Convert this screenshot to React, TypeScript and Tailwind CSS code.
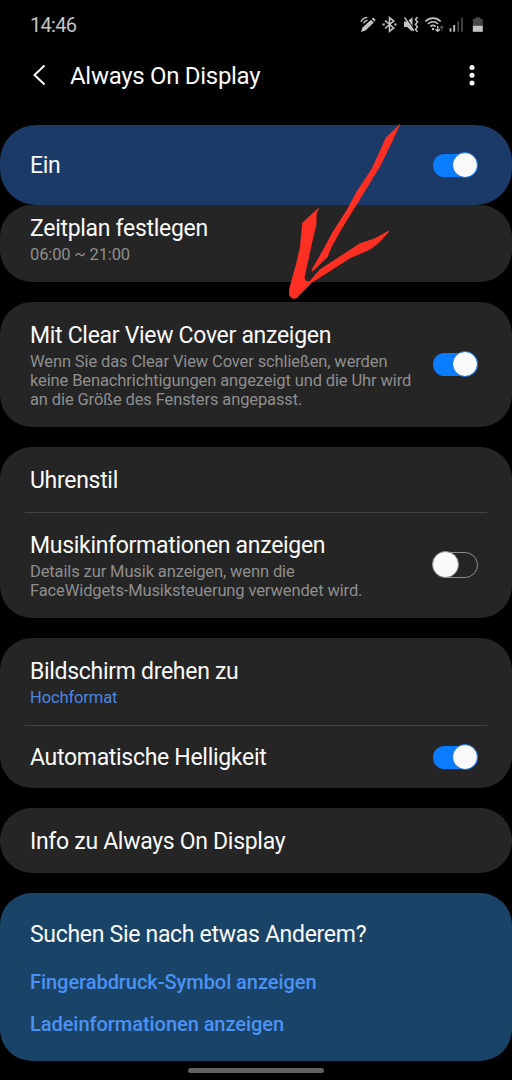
import { ReactNode, useState } from "react";

function Toggle({ initial, className = "" }: { initial: boolean; className?: string }) {
  const [on, setOn] = useState(initial);

  return (
    <button
      role="switch"
      aria-checked={on}
      onClick={() => setOn(!on)}
      className={`flex h-[26px] w-[45px] shrink-0 items-center ${className}`}
    >
      {on ? (
        <span className="flex h-[23px] w-full items-center justify-end rounded-full bg-[#0a7cff]">
          <span className="size-[26px] shrink-0 rounded-full border border-[#0a6fe0] bg-[#fafafa]" />
        </span>
      ) : (
        <span className="flex h-[26px] w-full items-center rounded-full border border-[#8c8c8c]">
          <span className="-ml-[2px] size-[27px] shrink-0 rounded-full border border-[#8c8c8c] bg-[#fafafa]" />
        </span>
      )}
    </button>
  );
}

interface RowProps {
  title: string;
  children?: ReactNode;
  toggle?: boolean;
  className?: string;
}

function Row({ title, children, toggle, className = "" }: RowProps) {
  return (
    <div className={`flex items-center justify-between pr-[34px] pl-[30px] ${className}`}>
      <div>
        <h2 className="pt-[2px] text-[23px] leading-[26px] tracking-[-0.3px]">{title}</h2>
        {children}
      </div>
      {toggle !== undefined && <Toggle initial={toggle} className={children ? "mb-[2px]" : ""} />}
    </div>
  );
}

function Divider() {
  return <div className="mr-[25px] ml-[25px] h-px bg-[#424242]" />;
}

function StatusIcons() {
  return (
    <svg className="h-[20px] w-[126px]" viewBox="358 14 126 20" fill="none" stroke="#c4c4c4">
      {/* pen */}
      <path d="M361 32l1.300-4.300 8.700-8 2.800 2.800-8.300 8z" fill="#c4c4c4" stroke="none" />
      <path d="M371.700 18.800l1.600-1.400 2.400 2.500-1.500 1.500z" fill="#c4c4c4" stroke="none" />
      <path d="M361 22c.8-2.700 3-4.300 6.300-4.500M363.600 23.300c.5-1.800 1.800-2.800 4-3" strokeWidth="1.300" />
      {/* bluetooth */}
      <path d="M385 20.500l8.700 7.500-4.200 3.300V17.700l4.200 3.300-8.700 7.500" strokeWidth="1.600" />
      <path d="M382.500 24.500h2.200M394.300 24.500h2.200" strokeWidth="2" />
      {/* muted, vibrate */}
      <path d="M404 21.500h3l5.500-4.200v14.500l-5.500-4.800h-3z" fill="#c4c4c4" stroke="none" />
      <path d="M405.500 16.800l9 13" stroke="#000" strokeWidth="1.200" />
      <path d="M404.500 17.300l9.300 13.200" strokeWidth="1.400" />
      <path d="M417.500 17l-2 2.400 2 2.500-2 2.500 2 2.500-2 2.500 2 2.400" strokeWidth="1.500" />
      {/* wifi */}
      <path d="M425.300 21.300c4.700-4.300 10.700-4.300 15.400 0M427.900 24c3.300-2.900 6.900-2.900 10.200 0M430.400 26.600c1.700-1.500 3.500-1.500 5.200 0" strokeWidth="1.600" />
      <circle cx="433" cy="29" r="1.200" fill="#c4c4c4" stroke="none" />
      <path d="M437.700 26v5M435.500 29.200l2.200 2.200 2.200-2.200" strokeWidth="1.300" />
      <path d="M441.800 30.500v-4M440 27.800l1.800-1.800 1.800 1.800" stroke="#555" strokeWidth="1.200" />
      {/* signal */}
      <path d="M450.500 28.300v3.500M454.200 25v6.800" strokeWidth="1.800" />
      <path d="M458.200 21.300v10.500M462 17.700v14.100" stroke="#484848" strokeWidth="1.700" />
      {/* battery */}
      <path d="M472.800 19h2.500v-1.700h5V19h2.500v7h-10z" fill="#484848" stroke="none" />
      <path d="M472.800 25.800h10v6h-10z" fill="#c4c4c4" stroke="none" />
    </svg>
  );
}

function Arrow() {
  return (
    <svg
      className="pointer-events-none absolute top-[120px] left-[280px] h-[185px] w-[125px]"
      viewBox="280 120 125 185"
      fill="#ff3023"
    >
      <path d="M400.500 123.500L385.500 138l-4 9.500-10 21.500-15.500 23.500-9.500 18-14.500 22.500-9 17L311.500 270l1 1.500 15-14.200 4-10.300 10-17.700 16.800-27.300 22-36 12.700-26z" />
      <path d="M318.500 208l-16.200 14.700-2.300 24-3.300 15L289 289.500l.3 6.200 4 3.300 3.400-1 15-15.300 15-9.400 23.300-15 20.700-9 9.300-7.600 9.500-10.500-1-.5-13.500 7.600-15 5-28.300 18.400-11.700 7.600-10.500 11.900-2.700.1-1.500-1.500-.7-2.500 7.400-34 4.300-18.300.5-12.500 2-3z" />
    </svg>
  );
}

export default function App() {
  return (
    <main className="relative h-[1080px] w-[512px] overflow-hidden bg-black font-[Roboto,sans-serif] text-[#fafafa]">
      <header>
        <div className="flex h-[48px] items-center justify-between pr-[28px] pl-[30px] text-[#c4c4c4]">
          <span className="pt-[2px] text-[20px] leading-[24px] tracking-[-0.7px]">14:46</span>
          <StatusIcons />
        </div>
        <div className="flex h-[77px] items-start pt-[14px] pr-[36px] pl-[32px]">
          <svg className="mt-[2px] h-[22px] w-[14px]" viewBox="0 0 14 22" fill="none" stroke="#fafafa" strokeWidth="2">
            <path d="M12.500 1.500L2.500 11l10 9.500" />
          </svg>
          <h1 className="ml-[24px] text-[24px] leading-[28px] tracking-[-0.3px]">Always On Display</h1>
          <svg className="mt-[2px] ml-auto h-[22px] w-[8px]" viewBox="0 0 8 22" fill="#fafafa">
            <circle cx="4" cy="3.500" r="2.500" />
            <circle cx="4" cy="11.200" r="2.500" />
            <circle cx="4" cy="19" r="2.500" />
          </svg>
        </div>
      </header>

      <section className="rounded-[36px] bg-[#1b3a67]">
        <Row title="Ein" toggle={true} className="h-[80px]" />
      </section>

      <section className="rounded-[32px] bg-[#252525]">
        <Row title="Zeitplan festlegen" className="h-[77px] pb-[9px]">
          <p className="mt-[3px] text-[16.5px] leading-[19px] tracking-[-0.12px] text-[#8e8e8e]">06:00 ~ 21:00</p>
        </Row>
      </section>

      <section className="mt-[20px] rounded-[32px] bg-[#252525]">
        <Row title="Mit Clear View Cover anzeigen" toggle={true} className="pt-[19px] pb-[18px]">
          <p className="mt-[3px] text-[16.5px] leading-[19px] tracking-[-0.12px] whitespace-nowrap text-[#8e8e8e]">
            Wenn Sie das Clear View Cover schließen, werden
            <br />
            keine Benachrichtigungen angezeigt und die Uhr wird
            <br />
            an die Größe des Fensters angepasst.
          </p>
        </Row>
      </section>

      <section className="mt-[20px] rounded-[32px] bg-[#252525]">
        <Row title="Uhrenstil" className="pt-[19px] pb-[18px]" />
        <Divider />
        <Row title="Musikinformationen anzeigen" toggle={false} className="pt-[18px] pb-[18px]">
          <p className="mt-[3px] text-[16.5px] leading-[19px] tracking-[-0.12px] whitespace-nowrap text-[#8e8e8e]">
            Details zur Musik anzeigen, wenn die
            <br />
            FaceWidgets-Musiksteuerung verwendet wird.
          </p>
        </Row>
      </section>

      <section className="mt-[20px] rounded-[32px] bg-[#252525]">
        <Row title="Bildschirm drehen zu" className="pt-[19px] pb-[18px]">
          <p className="mt-[3px] text-[16.5px] leading-[19px] tracking-[-0.12px] text-[#4b86e0]">Hochformat</p>
        </Row>
        <Divider />
        <Row title="Automatische Helligkeit" toggle={true} className="h-[62px]" />
      </section>

      <section className="mt-[20px] rounded-[32px] bg-[#252525]">
        <Row title="Info zu Always On Display" className="h-[65px]" />
      </section>

      <section className="mt-[20px] h-[168px] rounded-[32px] bg-[#1a4467] px-[30px] pt-[29px]">
        <h2 className="text-[23px] leading-[26px] tracking-[-0.3px]">Suchen Sie nach etwas Anderem?</h2>
        <a href="#" className="mt-[22px] block text-[20px] leading-[24px] font-medium tracking-[-0.05px] text-[#4a92f5]">
          Fingerabdruck-Symbol anzeigen
        </a>
        <a href="#" className="mt-[18px] block text-[20px] leading-[24px] font-medium tracking-[-0.05px] text-[#4a92f5]">
          Ladeinformationen anzeigen
        </a>
      </section>

      <div className="mx-auto mt-[7px] h-[5px] w-[136px] rounded-full bg-[#626262]" />

      <Arrow />
    </main>
  );
}
